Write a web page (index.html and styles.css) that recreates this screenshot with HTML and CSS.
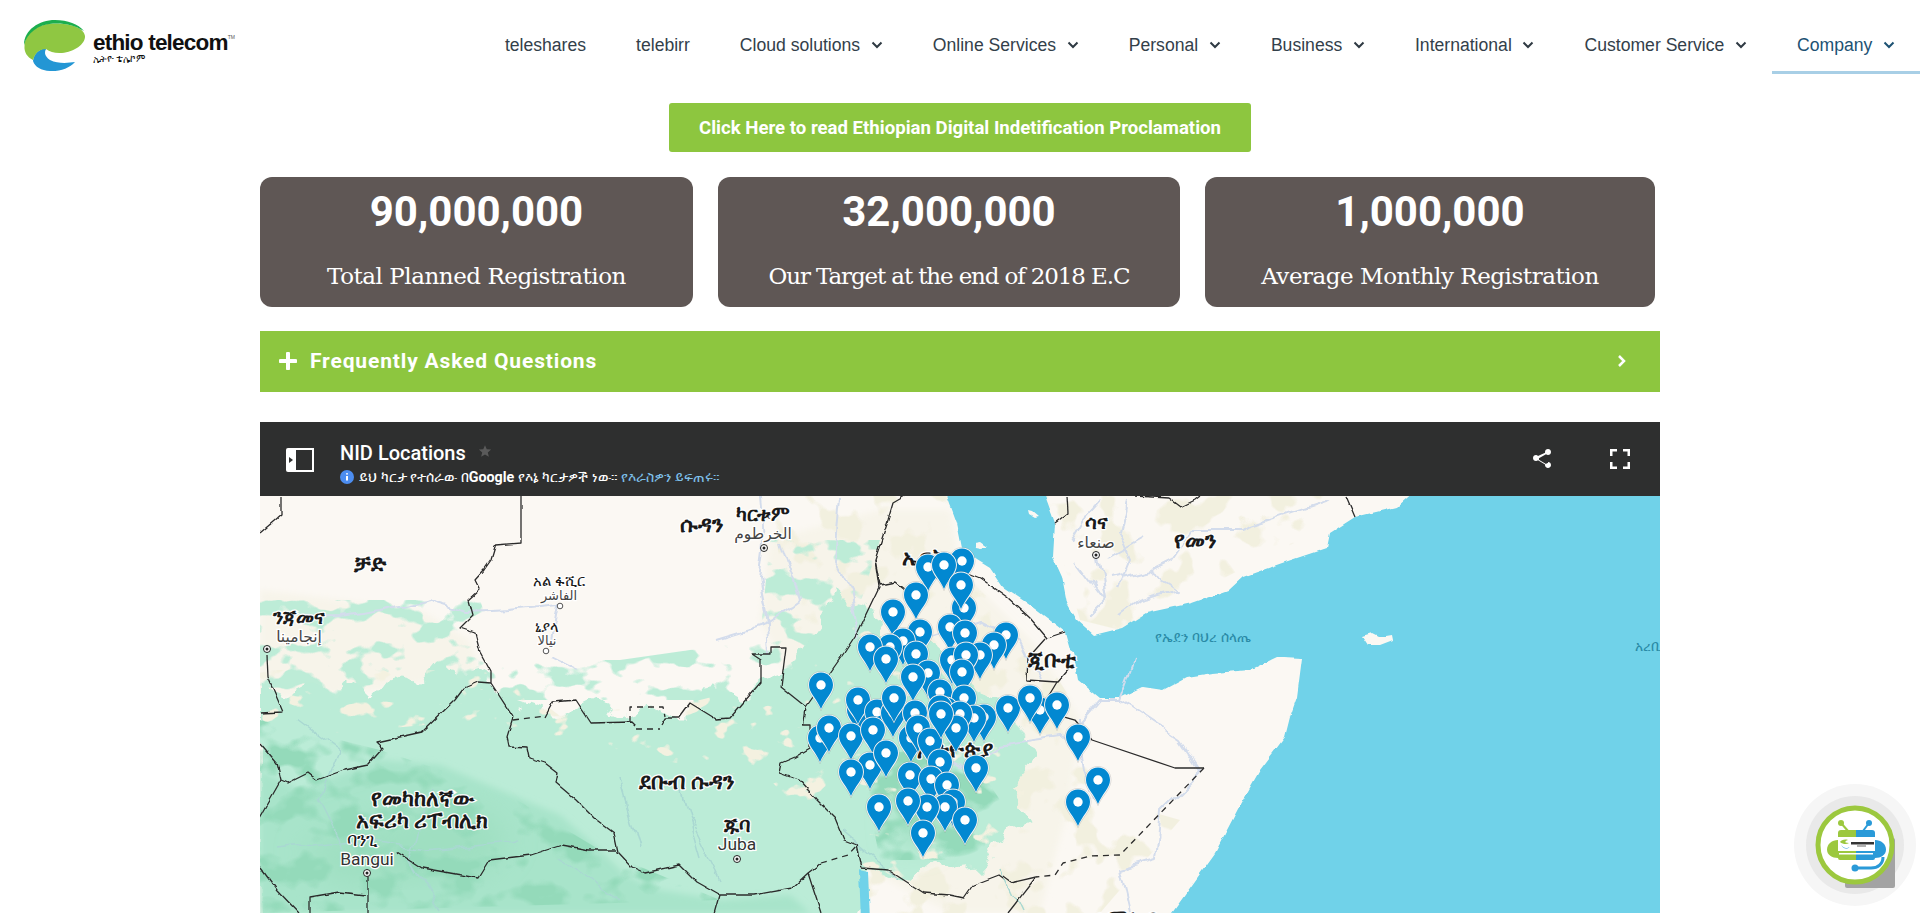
FILE: index.html
```html
<!DOCTYPE html>
<html lang="en">
<head>
<meta charset="utf-8">
<title>ethio telecom - NID Locations</title>
<link rel="stylesheet" href="styles.css">
</head>
<body>
<header class="site-header">
  <a class="brand" href="#">
    <svg class="brand-mark" viewBox="24 20 62 52" width="62" height="52" aria-hidden="true">
      <path class="lg-blue" d="M33 61C34 53 39 49 47 48C44 51 44 56 50 60C58 64 68 63 75 62C70 68 60 71.500 50 71C41 70.500 35 67 33 61Z"/>
      <path class="lg-light" d="M24.500 46C25 33 37 24 53 23.500C68 23 84 27 85 36C85.500 44 74 52 62 53C55 53.500 50 52 46 49C38 49 35 54 33 60C27 57 24 52 24.500 46Z"/>
      <path class="lg-dark" d="M24 45C24 30 39 20 55 20C68 20 78 24 84 31C74 25 65 23 53 23.500C38 24.500 27 33 24 45Z"/>
    </svg>
    <span class="brand-text">
      <span class="brand-name">ethio telecom<sup class="brand-tm">TM</sup></span>
      <span class="brand-sub">ኢትዮ ቴሌኮም</span>
    </span>
  </a>
  <nav class="main-nav">
    <a class="nav-item" href="#">teleshares</a>
    <a class="nav-item" href="#">telebirr</a>
    <a class="nav-item" href="#">Cloud solutions<svg class="chev" viewBox="0 0 12 8" width="12" height="8"><path d="M1.500 1.500 6 6l4.500-4.500"/></svg></a>
    <a class="nav-item" href="#">Online Services<svg class="chev" viewBox="0 0 12 8" width="12" height="8"><path d="M1.500 1.500 6 6l4.500-4.500"/></svg></a>
    <a class="nav-item" href="#">Personal<svg class="chev" viewBox="0 0 12 8" width="12" height="8"><path d="M1.500 1.500 6 6l4.500-4.500"/></svg></a>
    <a class="nav-item" href="#">Business<svg class="chev" viewBox="0 0 12 8" width="12" height="8"><path d="M1.500 1.500 6 6l4.500-4.500"/></svg></a>
    <a class="nav-item" href="#">International<svg class="chev" viewBox="0 0 12 8" width="12" height="8"><path d="M1.500 1.500 6 6l4.500-4.500"/></svg></a>
    <a class="nav-item" href="#">Customer Service<svg class="chev" viewBox="0 0 12 8" width="12" height="8"><path d="M1.500 1.500 6 6l4.500-4.500"/></svg></a>
    <a class="nav-item is-active" href="#">Company<svg class="chev" viewBox="0 0 12 8" width="12" height="8"><path d="M1.500 1.500 6 6l4.500-4.500"/></svg></a>
  </nav>
</header>

<main class="content">
  <div class="cta-row">
    <a class="cta" href="#">Click Here to read Ethiopian Digital Indetification Proclamation</a>
  </div>

  <section class="stats">
    <div class="stat stat-a"><div class="stat-num">90,000,000</div><div class="stat-cap">Total Planned Registration</div></div>
    <div class="stat stat-b"><div class="stat-num">32,000,000</div><div class="stat-cap">Our Target at the end of 2018 E.C</div></div>
    <div class="stat stat-c"><div class="stat-num">1,000,000</div><div class="stat-cap">Average Monthly Registration</div></div>
  </section>

  <section class="faq">
    <svg class="faq-plus" viewBox="0 0 18 18" width="18" height="18"><path d="M9 1.500v15M1.500 9h15"/></svg>
    <span class="faq-title">Frequently Asked Questions</span>
    <svg class="faq-chev" viewBox="0 0 10 14" width="10" height="14"><path d="M2 2l5 5-5 5"/></svg>
  </section>

  <section class="mapframe">
    <div class="map-bar">
      <svg class="map-panel" viewBox="0 0 28 24" width="28" height="24">
        <path class="panel-fill" d="M0 2a2 2 0 0 1 2-2h8v24H2a2 2 0 0 1-2-2z"/>
        <path class="panel-arrow" d="M3 9l4 3-4 3z"/>
        <path class="panel-line" d="M10 1h17v22H10"/>
      </svg>
      <div class="map-meta">
        <div class="map-title-row"><span class="map-title">NID Locations</span>
          <svg class="map-star" viewBox="0 0 24 24" width="14" height="14"><path d="M12 2l3 7 7.500.6-5.700 4.900 1.800 7.500L12 18l-6.600 4 1.800-7.500L1.500 9.600 9 9z"/></svg>
        </div>
        <div class="map-sub">
          <svg class="map-info" viewBox="0 0 14 14" width="14" height="14"><circle cx="7" cy="7" r="7"/><path d="M7 6v4.500M7 3.200v1.300"/></svg>
          <span>ይህ ካርታ የተሰራው በ<b>Google</b> የእኔ ካርታዎች ነው። <span class="map-link">የእራስዎን ይፍጠሩ።</span></span>
        </div>
      </div>
      <div class="map-tools">
        <svg class="tool" viewBox="0 0 24 24" width="24" height="24"><path d="M18 16.100c-.8 0-1.500.3-2 .8l-7.100-4.200c.1-.2.100-.5.100-.7s0-.5-.1-.7L16 7.200c.5.500 1.300.8 2 .8 1.700 0 3-1.300 3-3s-1.300-3-3-3-3 1.300-3 3c0 .2 0 .5.100.7L8 8.900C7.500 8.400 6.800 8 6 8c-1.700 0-3 1.300-3 3s1.300 3 3 3c.8 0 1.500-.3 2-.8l7.100 4.200c-.1.200-.1.400-.1.600 0 1.600 1.300 2.900 3 2.900s3-1.300 3-2.900-1.300-2.900-3-2.900z"/></svg>
        <svg class="tool" viewBox="0 0 24 24" width="24" height="24"><path d="M2 9V2h7v2.500H4.500V9zM15 2h7v7h-2.500V4.500H15zM2 15h2.500v4.500H9V22H2zM19.500 15H22v7h-7v-2.500h4.500z"/></svg>
      </div>
    </div>

    <svg class="map" viewBox="260 496 1400 417" width="1400" height="417" role="img" aria-label="Map of NID locations">
      <defs>
        <filter id="soft" x="-5%" y="-5%" width="110%" height="110%"><feGaussianBlur stdDeviation="3"/></filter>
        <filter id="softer" x="-5%" y="-5%" width="110%" height="110%"><feGaussianBlur stdDeviation="14"/></filter>
        <filter id="wobble" x="-2%" y="-2%" width="104%" height="104%">
          <feTurbulence type="fractalNoise" baseFrequency="0.045" numOctaves="3" seed="7"/>
          <feDisplacementMap in="SourceGraphic" scale="22" xChannelSelector="R" yChannelSelector="G"/>
        </filter>
        <filter id="fine" x="-2%" y="-2%" width="104%" height="104%">
          <feTurbulence type="fractalNoise" baseFrequency="0.09" numOctaves="2" seed="3"/>
          <feDisplacementMap in="SourceGraphic" scale="4" xChannelSelector="R" yChannelSelector="G"/>
        </filter>
        <filter id="river-fine" x="-2%" y="-2%" width="104%" height="104%">
          <feTurbulence type="fractalNoise" baseFrequency="0.03" numOctaves="3" seed="11"/>
          <feDisplacementMap in="SourceGraphic" scale="16" xChannelSelector="R" yChannelSelector="G"/>
        </filter>
        <filter id="mottle-sand" x="0" y="0" width="100%" height="100%" color-interpolation-filters="sRGB">
          <feTurbulence type="fractalNoise" baseFrequency="0.035 0.05" numOctaves="3" seed="21"/>
          <feColorMatrix values="0 0 0 0 .955  0 0 0 0 .945  0 0 0 0 .88  16 0 0 0 -10.400"/>
          <feComposite in2="SourceAlpha" operator="in"/>
        </filter>
        <filter id="mottle-mix" x="0" y="0" width="100%" height="100%" color-interpolation-filters="sRGB">
          <feTurbulence type="fractalNoise" baseFrequency="0.03 0.045" numOctaves="3" seed="5"/>
          <feColorMatrix values="0 0 0 0 .74  0 0 0 0 .925  0 0 0 0 .845  14 0 0 0 -7.400"/>
          <feComposite in2="SourceAlpha" operator="in"/>
        </filter>
        <filter id="mottle-deep" x="0" y="0" width="100%" height="100%" color-interpolation-filters="sRGB">
          <feTurbulence type="fractalNoise" baseFrequency="0.025 0.035" numOctaves="3" seed="14"/>
          <feColorMatrix values="0 0 0 0 .58  0 0 0 0 .855  0 0 0 0 .73  6 0 0 0 -2.900"/>
          <feComposite in2="SourceAlpha" operator="in"/>
        </filter>
        <filter id="mottle-tan" x="0" y="0" width="100%" height="100%" color-interpolation-filters="sRGB">
          <feTurbulence type="fractalNoise" baseFrequency="0.03" numOctaves="3" seed="33"/>
          <feColorMatrix values="0 0 0 0 .95  0 0 0 0 .94  0 0 0 0 .875  14 0 0 0 -7.600"/>
          <feComposite in2="SourceAlpha" operator="in"/>
        </filter>
        <g id="pin">
          <path class="pin-halo" d="M0-13.500C-7.500-13.500-13-7.500-13 0C-13 9-4.500 15 0 25.500C4.500 15 13 9 13 0C13-7.500 7.500-13.500 0-13.500Z"/>
          <path class="pin-body" d="M0-12.500C-7-12.500-12-7-12 0C-12 8-4 14 0 24C4 14 12 8 12 0C12-7 7-12.500 0-12.500Z"/>
          <circle class="pin-dot" r="4.700"/>
        </g>
      </defs>

      <rect class="land" x="260" y="496" width="1400" height="417"/>

      <!-- semi-arid tint -->
      <path class="tint" filter="url(#soft)" d="M260 590 340 600 420 610 470 640 480 670 440 680 380 690 260 700ZM770 540 880 510 950 510 960 570 1040 650 1080 720 1070 800 1040 913 950 913 850 860 800 700 760 620Z"/>
      <path class="mask" filter="url(#mottle-tan)" d="M770 496H950L960 570 1040 650 1090 730 1110 800 1180 820 1100 913H860L800 700ZM1045 496H1330L1300 540 1120 630 1080 620Z"/>
      <path class="mask" filter="url(#mottle-mix)" d="M260 600H480L500 660 620 660 760 640 770 540 880 540 830 700H260Z"/>

      <!-- green belt -->
      <g filter="url(#wobble)">
        <path class="green" d="M260 682 290 694 312 682 330 698 350 676 372 698 396 670 420 684 440 662 464 676 486 668 500 696 524 704 560 716 590 700 620 716 650 706 680 720 700 700 712 684 740 700 762 680 790 672 800 650 824 616 836 590 852 608 872 600 880 640 900 650 930 634 950 672 985 696 1010 708 1025 738 1035 760 1010 790 1030 825 1002 838 985 868 960 870 935 860 905 885 870 870 858 920 260 920Z"/>
      </g>
      <path class="green-deep" filter="url(#soft)" d="M260 770 300 790 380 760 440 765 500 790 560 815 600 850 625 875 660 890 720 900 790 895 810 913 260 913Z"/>
      <path class="green-deep2" filter="url(#softer)" d="M300 850 350 830 420 810 480 810 510 840 480 875 400 880 340 885ZM895 810 925 795 945 815 925 845 900 845Z"/>
      <path class="mask" filter="url(#mottle-deep)" d="M260 720 380 750 500 790 600 850 720 900 260 913ZM860 760 960 740 1000 800 980 860 880 860Z"/>
      <path class="mask" filter="url(#mottle-sand)" d="M260 670H500L560 716 700 700 780 680 800 650 830 600 880 640 950 672 1030 740 1020 830 970 870 880 880 800 810 770 780 660 760 480 720 260 740Z"/>

      <!-- water -->
      <g filter="url(#fine)">
        <path class="sea" d="M947 490 947 496 957 523 962 548 977 560 990 568 1003 587 1027 603 1047 618 1065 632 1070 650 1073 652 1078 680 1100 698 1120 698 1143 687 1163 690 1187 677 1213 673 1250 670 1277 657 1283 657 1302 658 1297 697 1290 717 1285 737 1260 770 1239 807 1215 853 1167 920 1670 920 1670 490 1416 490 1397 507 1355 517 1330 533 1327 548 1285 562 1243 577 1229 590 1192 603 1146 613 1122 628 1094 635 1077 620 1067 603 1062 577 1053 557 1055 523 1043 490Z"/>
        <path class="land" d="M1362 636 1372 633 1380 637 1392 635 1393 640 1380 645 1368 645Z"/>
        <path class="land" d="M1028 510 1032 511 1038 516 1034 517 1029 514ZM975 543 981 542 988 547 981 548 976 547Z"/>
        <path class="sea" d="M859 870 868 872 870 920 861 920Z"/>
      </g>

      <!-- rivers -->
      <g class="river" filter="url(#river-fine)">
        <path d="M300 618 339 617 380 611 429 600 469 612 510 610 558 605"/>
        <path d="M558 606 552 640M550 655 580 670"/>
        <path d="M760 496 764 540 759 577 768 625 770 650M715 640 765 625 800 600 790 570 780 540M840 496 835 560 850 590 860 640"/>
        <path d="M1100 500 1082 520 1070 540M1098 555 1105 600M1110 580 1150 570 1170 560 1190 530 1240 530 1300 510 1330 500M1150 570 1180 590 1140 600"/>
        <path d="M1125 500 1118 530 1130 560 1118 590M1075 560 1090 580 1105 600 1090 615M1110 560 1145 540M1140 600 1120 615"/>
        <path d="M880 720 960 770 1000 745 1070 735 1100 700 1120 700 1180 740 1200 770 1160 810 1155 860 1120 870 1130 913"/>
        <path d="M1078 720 1083 770 1095 800M1120 700 1135 660M920 640 980 620 1020 640 1040 680"/>
        <path class="river-faint" d="M300 720 340 750 320 800 350 860M430 790 410 860 440 910M620 780 640 850M690 820 720 880M560 860 620 900M280 850 360 840 430 850 520 840M680 790 700 860M840 830 900 880M1000 870 1020 913"/>
      </g>

      <!-- borders -->
      <g class="border" filter="url(#fine)">
        <path d="M260 533 281 515 281 496"/>
        <path d="M521 496 521 543 495.500 545 491 560 484 570 475 580 480 590 469 600 473 615 460 628 475 633 480 652 491 672 491 683 513 717"/>
        <path d="M491 683 478 682 464 688 455 700 437.500 717 422 732 377 742 383 748 368 765 344 770 317 780 308 773 288 783 281 780 277 763 260 743"/>
        <path d="M281 780 260 817M267 655 268 677 283 712 260 713"/>
        <path d="M545 717 553 702 576 700 591 723 632 722 636 726M661 725 665 718 679 718 690 703 716 719 730 718 761 682 761 660 752 654 770 654 770 647 786 647 781 687 806 707 803.600 725 810 725 810 748 795 757 781 763 779 773 799 780 817 800 835 818 844 840 857 845 862 868 888 870 924 893 950 895 964 898 973 885 999 875 1010 883 1036 877 1008 913"/>
        <path d="M513 717 507 737 509 747 527 748 529 758 545 763 558 773 556 783 576 800 594 818 614 833 618 852 632 867 645 873 679 865 696 882 719 895 754 895 792 888 808 873 821 863"/>
        <path d="M397 852 422 868 478 878 489 860 531 855 562 845 589 850 616 850"/>
        <path d="M368 873 368 913M310 913 310 897 339 892 366 895M260 867 277 890 299 913M719 895 714 913M808 873 821 913"/>
        <path d="M806 707 844 653 857 633 879 587 875 560 888 520 893 503 905 496"/>
        <path d="M875 560 880 585 895 582 905 590 960 570 980 578 1007 597 1030 618 1047 638 1065 632"/>
        <path d="M1045 638 1028 657 1027 680 1057 682 1070 667"/>
        <path d="M1067 496 1068 513 1055 523M1136 496 1169 498 1181 507 1195 500 1200 496M1346 496 1355 517"/>
      </g>
      <g class="border">
        <path d="M1057 682 1040 710 1075 720 1092 740 1175 768 1204 768"/>
        <path class="dash" d="M1204 768 1120 855 1090 856 1063 863 1055 875 1036 877"/>
        <path class="dash" d="M513 720 545 716M630 722 630 707 663 707 665 717M636 729 660 729M821 863 848 855 857 845"/>
      </g>

      <!-- labels -->
      <g>
        <text class="lbl lbl-b" x="702" y="532">ሱዳን</text>
        <text class="lbl lbl-s" x="763" y="521">ካርቱም</text>
        <text class="lbl lbl-ar" x="763" y="539">الخرطوم</text>
        <text class="lbl lbl-b" x="370" y="571">ቻድ</text>
        <text class="lbl lbl-s" x="299" y="624">ንጃመና</text>
        <text class="lbl lbl-ar" x="299" y="642">إنجامينا</text>
        <text class="lbl lbl-m" x="559" y="586">አል ፋሺር</text>
        <text class="lbl lbl-ar lbl-ars" x="559" y="600">الفاشر</text>
        <text class="lbl lbl-m" x="547" y="632">ኒያላ</text>
        <text class="lbl lbl-ar lbl-ars" x="547" y="645">نيالا</text>
        <text class="lbl lbl-b" x="687" y="789">ደቡብ ሱዳን</text>
        <text class="lbl lbl-b" x="422" y="806">የመካከለኛው</text>
        <text class="lbl lbl-b" x="422" y="828">አፍሪካ ሪፐብሊክ</text>
        <text class="lbl lbl-r" x="362" y="846">ባንጊ</text>
        <text class="lbl lbl-r lbl-lat" x="367" y="865">Bangui</text>
        <text class="lbl lbl-s" x="737" y="832">ጁባ</text>
        <text class="lbl lbl-r lbl-lat" x="737" y="850">Juba</text>
        <text class="lbl lbl-b" x="932" y="565">ኤርትራ</text>
        <text class="lbl lbl-s" x="1096" y="529">ሳና</text>
        <text class="lbl lbl-ar" x="1096" y="548">صنعاء</text>
        <text class="lbl lbl-b" x="1195" y="548">የመን</text>
        <text class="lbl lbl-b" x="1052" y="667">ጂቡቲ</text>
        <text class="lbl lbl-b" x="955" y="757">ኢትዮጵያ</text>
        <text class="lbl lbl-b" x="1125" y="926">ሶማሊያ</text>
        <text class="lbl-sea" x="1203" y="642">የኤደን ባህረ ሰላጤ</text>
        <text class="lbl-sea lbl-sea-start" x="1635" y="651">አረቢያ ባህር</text>
      </g>
      <g class="city">
        <circle cx="764" cy="548" r="3.500"/><circle cx="267" cy="649" r="3.500"/><circle cx="367" cy="873" r="3.500"/><circle cx="737" cy="859" r="3.500"/><circle cx="1096" cy="555" r="3.500"/>
      </g>
      <g class="city-dot">
        <circle cx="764" cy="548" r="1.500"/><circle cx="267" cy="649" r="1.500"/><circle cx="367" cy="873" r="1.500"/><circle cx="737" cy="859" r="1.500"/><circle cx="1096" cy="555" r="1.500"/>
      </g>
      <g class="town"><circle cx="560" cy="606" r="2.800"/><circle cx="546" cy="651" r="2.800"/></g>

      <!-- pins -->
      <g>
        <use href="#pin" x="962" y="561"/><use href="#pin" x="928" y="567"/><use href="#pin" x="944" y="565"/>
        <use href="#pin" x="916" y="595"/><use href="#pin" x="964" y="608"/><use href="#pin" x="961" y="585"/>
        <use href="#pin" x="893" y="612"/><use href="#pin" x="920" y="632"/><use href="#pin" x="950" y="627"/>
        <use href="#pin" x="965" y="633"/><use href="#pin" x="1006" y="635"/><use href="#pin" x="994" y="645"/>
        <use href="#pin" x="903" y="641"/><use href="#pin" x="916" y="654"/>
        <use href="#pin" x="890" y="647"/><use href="#pin" x="870" y="647"/><use href="#pin" x="886" y="659"/>
        <use href="#pin" x="952" y="660"/><use href="#pin" x="980" y="655"/><use href="#pin" x="966" y="655"/>
        <use href="#pin" x="928" y="673"/><use href="#pin" x="913" y="677"/><use href="#pin" x="962" y="672"/>
        <use href="#pin" x="940" y="692"/><use href="#pin" x="964" y="698"/>
        <use href="#pin" x="821" y="685"/><use href="#pin" x="859" y="710"/><use href="#pin" x="858" y="700"/>
        <use href="#pin" x="877" y="712"/><use href="#pin" x="893" y="713"/><use href="#pin" x="894" y="698"/>
        <use href="#pin" x="915" y="713"/><use href="#pin" x="984" y="717"/><use href="#pin" x="974" y="718"/>
        <use href="#pin" x="946" y="710"/><use href="#pin" x="940" y="708"/><use href="#pin" x="960" y="714"/>
        <use href="#pin" x="820" y="738"/><use href="#pin" x="829" y="728"/><use href="#pin" x="851" y="736"/>
        <use href="#pin" x="873" y="730"/><use href="#pin" x="911" y="738"/><use href="#pin" x="918" y="728"/>
        <use href="#pin" x="956" y="728"/><use href="#pin" x="930" y="741"/><use href="#pin" x="941" y="714"/>
        <use href="#pin" x="1008" y="708"/><use href="#pin" x="1040" y="710"/><use href="#pin" x="1030" y="698"/><use href="#pin" x="1057" y="705"/>
        <use href="#pin" x="1078" y="737"/><use href="#pin" x="1098" y="780"/><use href="#pin" x="1078" y="802"/>
        <use href="#pin" x="976" y="768"/><use href="#pin" x="870" y="765"/><use href="#pin" x="886" y="753"/>
        <use href="#pin" x="851" y="772"/><use href="#pin" x="940" y="762"/>
        <use href="#pin" x="910" y="775"/><use href="#pin" x="931" y="779"/><use href="#pin" x="947" y="785"/>
        <use href="#pin" x="953" y="802"/><use href="#pin" x="945" y="807"/><use href="#pin" x="927" y="807"/><use href="#pin" x="908" y="801"/>
        <use href="#pin" x="879" y="807"/><use href="#pin" x="965" y="820"/><use href="#pin" x="923" y="833"/>
      </g>
    </svg>
  </section>
</main>

<aside class="chatbot" aria-label="Chat assistant">
  <svg viewBox="0 0 128 128" width="128" height="128">
    <circle class="cb-outer" cx="64" cy="64" r="61"/>
    <circle class="cb-mid" cx="64" cy="64" r="49"/>
    <rect class="cb-shadow" x="54" y="57" width="50" height="50" rx="2"/>
    <circle class="cb-ring" cx="64" cy="64" r="37"/>
    <path class="cb-gline" d="M50 42l7 8"/><path class="cb-bline" d="M78 42l-6 8"/>
    <circle class="cb-green" cx="50" cy="42" r="3"/><circle class="cb-blue" cx="78" cy="42" r="3"/>
    <path class="cb-green" d="M47 59c-6 0-11 4-11 9.500S41 77 47 77z"/>
    <path class="cb-blue" d="M84 59c6 0 11 4 11 9.500S90 77 84 77z"/>
    <path class="cb-mic" d="M92 76c0 7-5 11-12 11H66"/>
    <circle class="cb-blue" cx="64" cy="87" r="3.500"/>
    <path class="cb-green" d="M65 49H50a3 3 0 0 0-3 3v25a2 2 0 0 0 2 2h16z"/>
    <path class="cb-blue" d="M65 49h16a3 3 0 0 1 3 3v25a2 2 0 0 1-2 2H65z"/>
    <rect class="cb-card" x="47" y="56" width="37" height="14"/>
    <path class="cb-green" d="M49 61c1-2 5-3 8-2-2 .5-3 1.500-2.500 2.500l3.500.5c-2 1.500-6 1.500-9-1z"/>
    <path class="cb-blue" d="M50 63c1 2.500 3 4 5 4s2.500-.5 3.500-1c-2 2.500-7 2.500-8.500-3z"/>
    <rect class="cb-text" x="60" y="61" width="23" height="2.500"/>
    <rect class="cb-text-thin" x="66" y="64.500" width="9" height="1"/>
    <rect class="cb-card" x="48" y="72" width="34" height="1.500"/>
  </svg>
</aside>
</body>
</html>
```

FILE: styles.css
```css
* { box-sizing: border-box; }
html, body { margin: 0; padding: 0; background: #fff; }
body { font-family: "Liberation Sans", Arial, sans-serif; overflow: hidden; height: 913px; }
a { text-decoration: none; color: inherit; }

/* header */
.site-header { display: flex; justify-content: space-between; align-items: stretch; height: 74px; }
.brand { display: flex; align-items: flex-start; gap: 7px; padding: 20px 0 0 24px; }
.brand-mark { display: block; }
.lg-blue { fill: #2396d4; }
.lg-light { fill: #8fc742; }
.lg-dark { fill: #1cae4e; }
.brand-text { display: flex; flex-direction: column; padding-top: 12px; }
.brand-name { font-family: "Liberation Sans", sans-serif; font-weight: 700; font-size: 22.500px; line-height: 22px; letter-spacing: -0.8px; color: #111; white-space: nowrap; }
.brand-tm { font-size: 5px; font-weight: 400; letter-spacing: 0; vertical-align: 11px; line-height: 0; color: #555; }
.brand-sub { font-family: "Noto Sans", "DejaVu Sans", sans-serif; font-size: 9.500px; line-height: 10px; color: #111; }

.main-nav { display: flex; align-items: stretch; }
.nav-item { display: flex; align-items: center; padding: 16px 25px 0; font-size: 17.6px; color: #33404a; white-space: nowrap; height: 74px; }
.nav-item.is-active { color: #1d5273; border-bottom: 3px solid #a8cfe6; padding-top: 19px; }
.chev { margin-left: 10.700px; fill: none; stroke: #2f3a43; stroke-width: 2; }
.is-active .chev { stroke: #1d5273; }

/* content */
.content { width: 1400px; margin: 0 auto; }
.cta-row { display: flex; justify-content: center; padding-top: 29px; }
.cta { display: flex; align-items: center; justify-content: center; width: 582px; height: 49px; background: #8dc63f; border-radius: 3px; color: #fff; font-family: Roboto, sans-serif; font-weight: 700; font-size: 18.600px; }

.stats { display: flex; gap: 25px; margin-top: 25px; }
.stat { height: 130px; background: #5f5755; border-radius: 12px; color: #fff; text-align: center; padding-top: 9px; }
.stat-a { width: 433px; }
.stat-b { width: 462px; }
.stat-c { width: 450px; }
.stat-num { font-family: Roboto, sans-serif; font-weight: 700; font-size: 42px; line-height: 51px; }
.stat-cap { font-family: "DejaVu Serif", serif; font-size: 23px; line-height: 30px; margin-top: 24px; letter-spacing: -0.46px; }
.stat-b .stat-cap { letter-spacing: -1.130px; }

.faq { display: flex; align-items: center; height: 61px; margin-top: 24px; padding: 0 0 1px 19px; background: #8dc63f; color: #fff; }
.faq-plus { fill: none; stroke: #fff; stroke-width: 4; stroke-linecap: round; }
.faq-title { font-family: Roboto, sans-serif; font-weight: 700; font-size: 21px; letter-spacing: 0.85px; margin-left: 13px; flex: 1; }
.faq-chev { fill: none; stroke: #fff; stroke-width: 2.500; margin-right: 33px; }

/* map header */
.mapframe { margin-top: 30px; }
.map-bar { display: flex; align-items: flex-start; height: 74px; background: #2e2f2f; color: #fff; font-family: Roboto, sans-serif; padding: 26px 0 0 26px; }
.map-panel { flex: none; }
.panel-fill { fill: #fff; }
.panel-arrow { fill: #2e2f2f; }
.panel-line { fill: none; stroke: #fff; stroke-width: 2; }
.map-meta { margin: -7px 0 0 26px; flex: 1; }
.map-title-row { display: flex; align-items: center; height: 24px; }
.map-title { font-weight: 500; font-size: 20px; line-height: 24px; }
.map-star { fill: #5a5a5a; margin-left: 12px; margin-top: -4px; }
.map-sub { display: flex; align-items: center; gap: 5px; margin-top: 5px; font-family: Roboto, "Noto Sans", "DejaVu Sans", sans-serif; font-size: 14.300px; line-height: 14px; color: #fff; }
.map-info { flex: none; }
.map-info circle { fill: #4c8df0; }
.map-info path { stroke: #fff; stroke-width: 2; }
.map-link { color: #7ec0ea; }
.map-tools { display: flex; gap: 54px; margin: -1px 28px 0 0; }
.tool { fill: #fff; }

/* map */
.map { display: block; }
.land { fill: #fbf8f3; }
.tint { fill: #f7f4ea; }
.mask { fill: #000; }
.green { fill: #bbecd7; }
.green-deep { fill: #a8e4ca; }
.green-deep2 { fill: #9fdfc1; }
.sea { fill: #6fd2e9; }
.river { fill: none; stroke: #d3dcec; stroke-width: 2; stroke-linejoin: round; }
.river-faint { stroke: #a9d8d2; stroke-width: 1.500; }
.border { fill: none; stroke: #2b2b2b; stroke-width: 1.300; stroke-linejoin: round; }
.border .dash { stroke-dasharray: 6 5; }
.lbl { font-family: "Noto Sans", "DejaVu Sans", sans-serif; text-anchor: middle; fill: #1a1a1a; stroke: #fff; stroke-width: 2.500; paint-order: stroke; }
.lbl-b { font-size: 21.500px; font-weight: 700; }
.lbl-s { font-size: 19.500px; font-weight: 700; }
.lbl-m { font-size: 14.500px; font-weight: 500; }
.lbl-r { font-size: 18px; }
.lbl-lat { font-family: Roboto, sans-serif; font-size: 17.400px; fill: #333; }
.lbl-ar { font-family: "DejaVu Sans", sans-serif; font-size: 15.500px; fill: #444; }
.lbl-ars { font-size: 13px; }
.lbl-sea { font-family: "Noto Sans", "DejaVu Sans", sans-serif; font-size: 14.200px; fill: #2a8aa6; text-anchor: middle; }
.lbl-sea-start { text-anchor: start; }
.city circle { fill: #fff; stroke: #222; stroke-width: 1; }
.city-dot circle { fill: #222; }
.town circle { fill: #fff; stroke: #555; stroke-width: 1; }
.pin-halo { fill: #fff; stroke: rgba(0, 0, 0, 0.25); stroke-width: 0.500; }
.pin-body { fill: #0288d1; }
.pin-dot { fill: #fff; }

/* chatbot */
.chatbot { position: fixed; left: 1791px; top: 781px; width: 128px; height: 128px; }
.chatbot svg { display: block; }
.cb-outer { fill: #f6f6f6; }
.cb-mid { fill: #e9e9e9; }
.cb-shadow { fill: #a3a3a3; }
.cb-ring { fill: #fff; stroke: #9cc83e; stroke-width: 5; }
.cb-green { fill: #9cc83e; }
.cb-blue { fill: #2a9ad8; }
.cb-gline { stroke: #9cc83e; stroke-width: 2; }
.cb-bline { stroke: #2a9ad8; stroke-width: 2; }
.cb-mic { fill: none; stroke: #2a9ad8; stroke-width: 3; }
.cb-card { fill: #fff; }
.cb-text { fill: #333; }
.cb-text-thin { fill: #666; }
```
